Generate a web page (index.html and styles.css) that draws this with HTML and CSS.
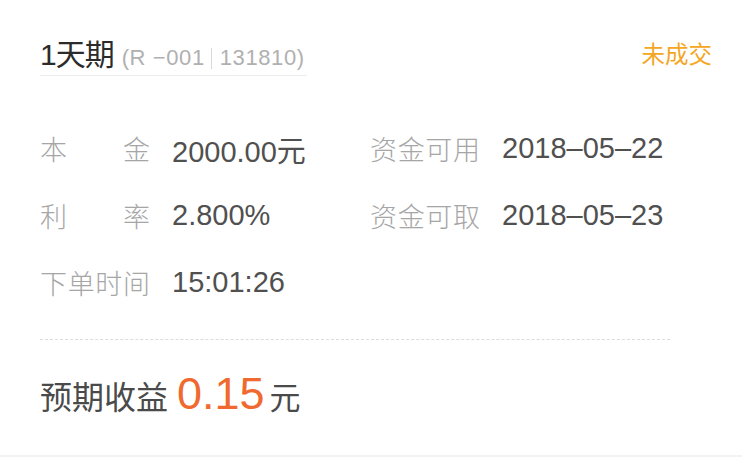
FILE: index.html
```html
<!DOCTYPE html>
<html lang="zh-CN">
<head>
<meta charset="utf-8">
<link rel="stylesheet" href="styles.css">
</head>
<body>
<div class="card">
  <div class="header">
    <div class="title">
      <span class="name">1天期</span>
      <span class="code">(R −001<span class="sep"></span>131810)</span>
    </div>
    <div class="status">未成交</div>
  </div>
  <div class="grid">
    <div class="cell"><span class="label">本金</span><span class="value">2000.00元</span></div>
    <div class="cell"><span class="label plain">资金可用</span><span class="value">2018–05–22</span></div>
    <div class="cell"><span class="label">利率</span><span class="value">2.800%</span></div>
    <div class="cell"><span class="label plain">资金可取</span><span class="value">2018–05–23</span></div>
    <div class="cell"><span class="label plain">下单时间</span><span class="value">15:01:26</span></div>
  </div>
  <div class="divider"></div>
  <div class="income">
    <span class="income-label">预期收益</span>
    <span class="income-num">0.15</span>
    <span class="income-unit">元</span>
  </div>
</div>
<div class="footer-strip"></div>
</body>
</html>
```
FILE: styles.css
```css
html, body {
  margin: 0;
  padding: 0;
  background: #ffffff;
}
body {
  font-family: "Liberation Sans", "Noto Sans CJK SC", sans-serif;
  height: 457px;
  display: flex;
  flex-direction: column;
  overflow: hidden;
}
.card {
  flex: 1;
  padding: 35px 30px 0 40px;
}
.header {
  display: flex;
  justify-content: space-between;
  align-items: flex-start;
}
.title {
  display: flex;
  align-items: baseline;
  height: 40px;
  line-height: 40px;
  border-bottom: 1px solid #ececec;
  padding-right: 2px;
}
.name {
  font-size: 30px;
  color: #2b2b2b;
  letter-spacing: -1px;
}
.code {
  font-size: 22px;
  color: #b0b0b0;
  margin-left: 8px;
  letter-spacing: 0.6px;
  display: inline-flex;
  align-items: center;
}
.sep {
  display: inline-block;
  width: 1px;
  height: 21px;
  background: #d8d8d8;
  margin: 0 8px 0 6px;
}
.status {
  font-size: 23.5px;
  color: #f5a623;
  line-height: 40px;
}
.grid {
  margin-top: 39px;
  display: grid;
  grid-template-columns: 330px 330px;
}
.cell {
  display: flex;
  align-items: center;
  height: 67px;
}
.label {
  width: 110px;
  margin-right: 22px;
  font-size: 27px;
  color: #a6a6a6;
  text-align: justify;
  text-align-last: justify;
  font-family: "Noto Sans CJK SC", sans-serif;
  font-weight: 300;
}
.value {
  font-size: 29px;
  color: #505050;
}
.value, .income-num {
  font-family: "Liberation Sans", "Noto Sans CJK SC", sans-serif;
}
.divider {
  margin-top: 23px;
  width: 630px;
  border-top: 1px dashed #dcdcdc;
}
.income {
  display: flex;
  align-items: baseline;
  margin-top: 24px;
  line-height: 60px;
}
.income-label {
  font-size: 32px;
  color: #4a4a4a;
  font-family: "Noto Sans CJK SC", sans-serif;
}
.income-num {
  font-size: 45px;
  color: #f0692f;
  margin-left: 9px;
}
.income-unit {
  font-size: 31px;
  color: #4a4a4a;
  margin-left: 5px;
  font-family: "Noto Sans CJK SC", sans-serif;
}
.footer-strip {
  height: 2px;
  background: #f2f2f5;
}
```
